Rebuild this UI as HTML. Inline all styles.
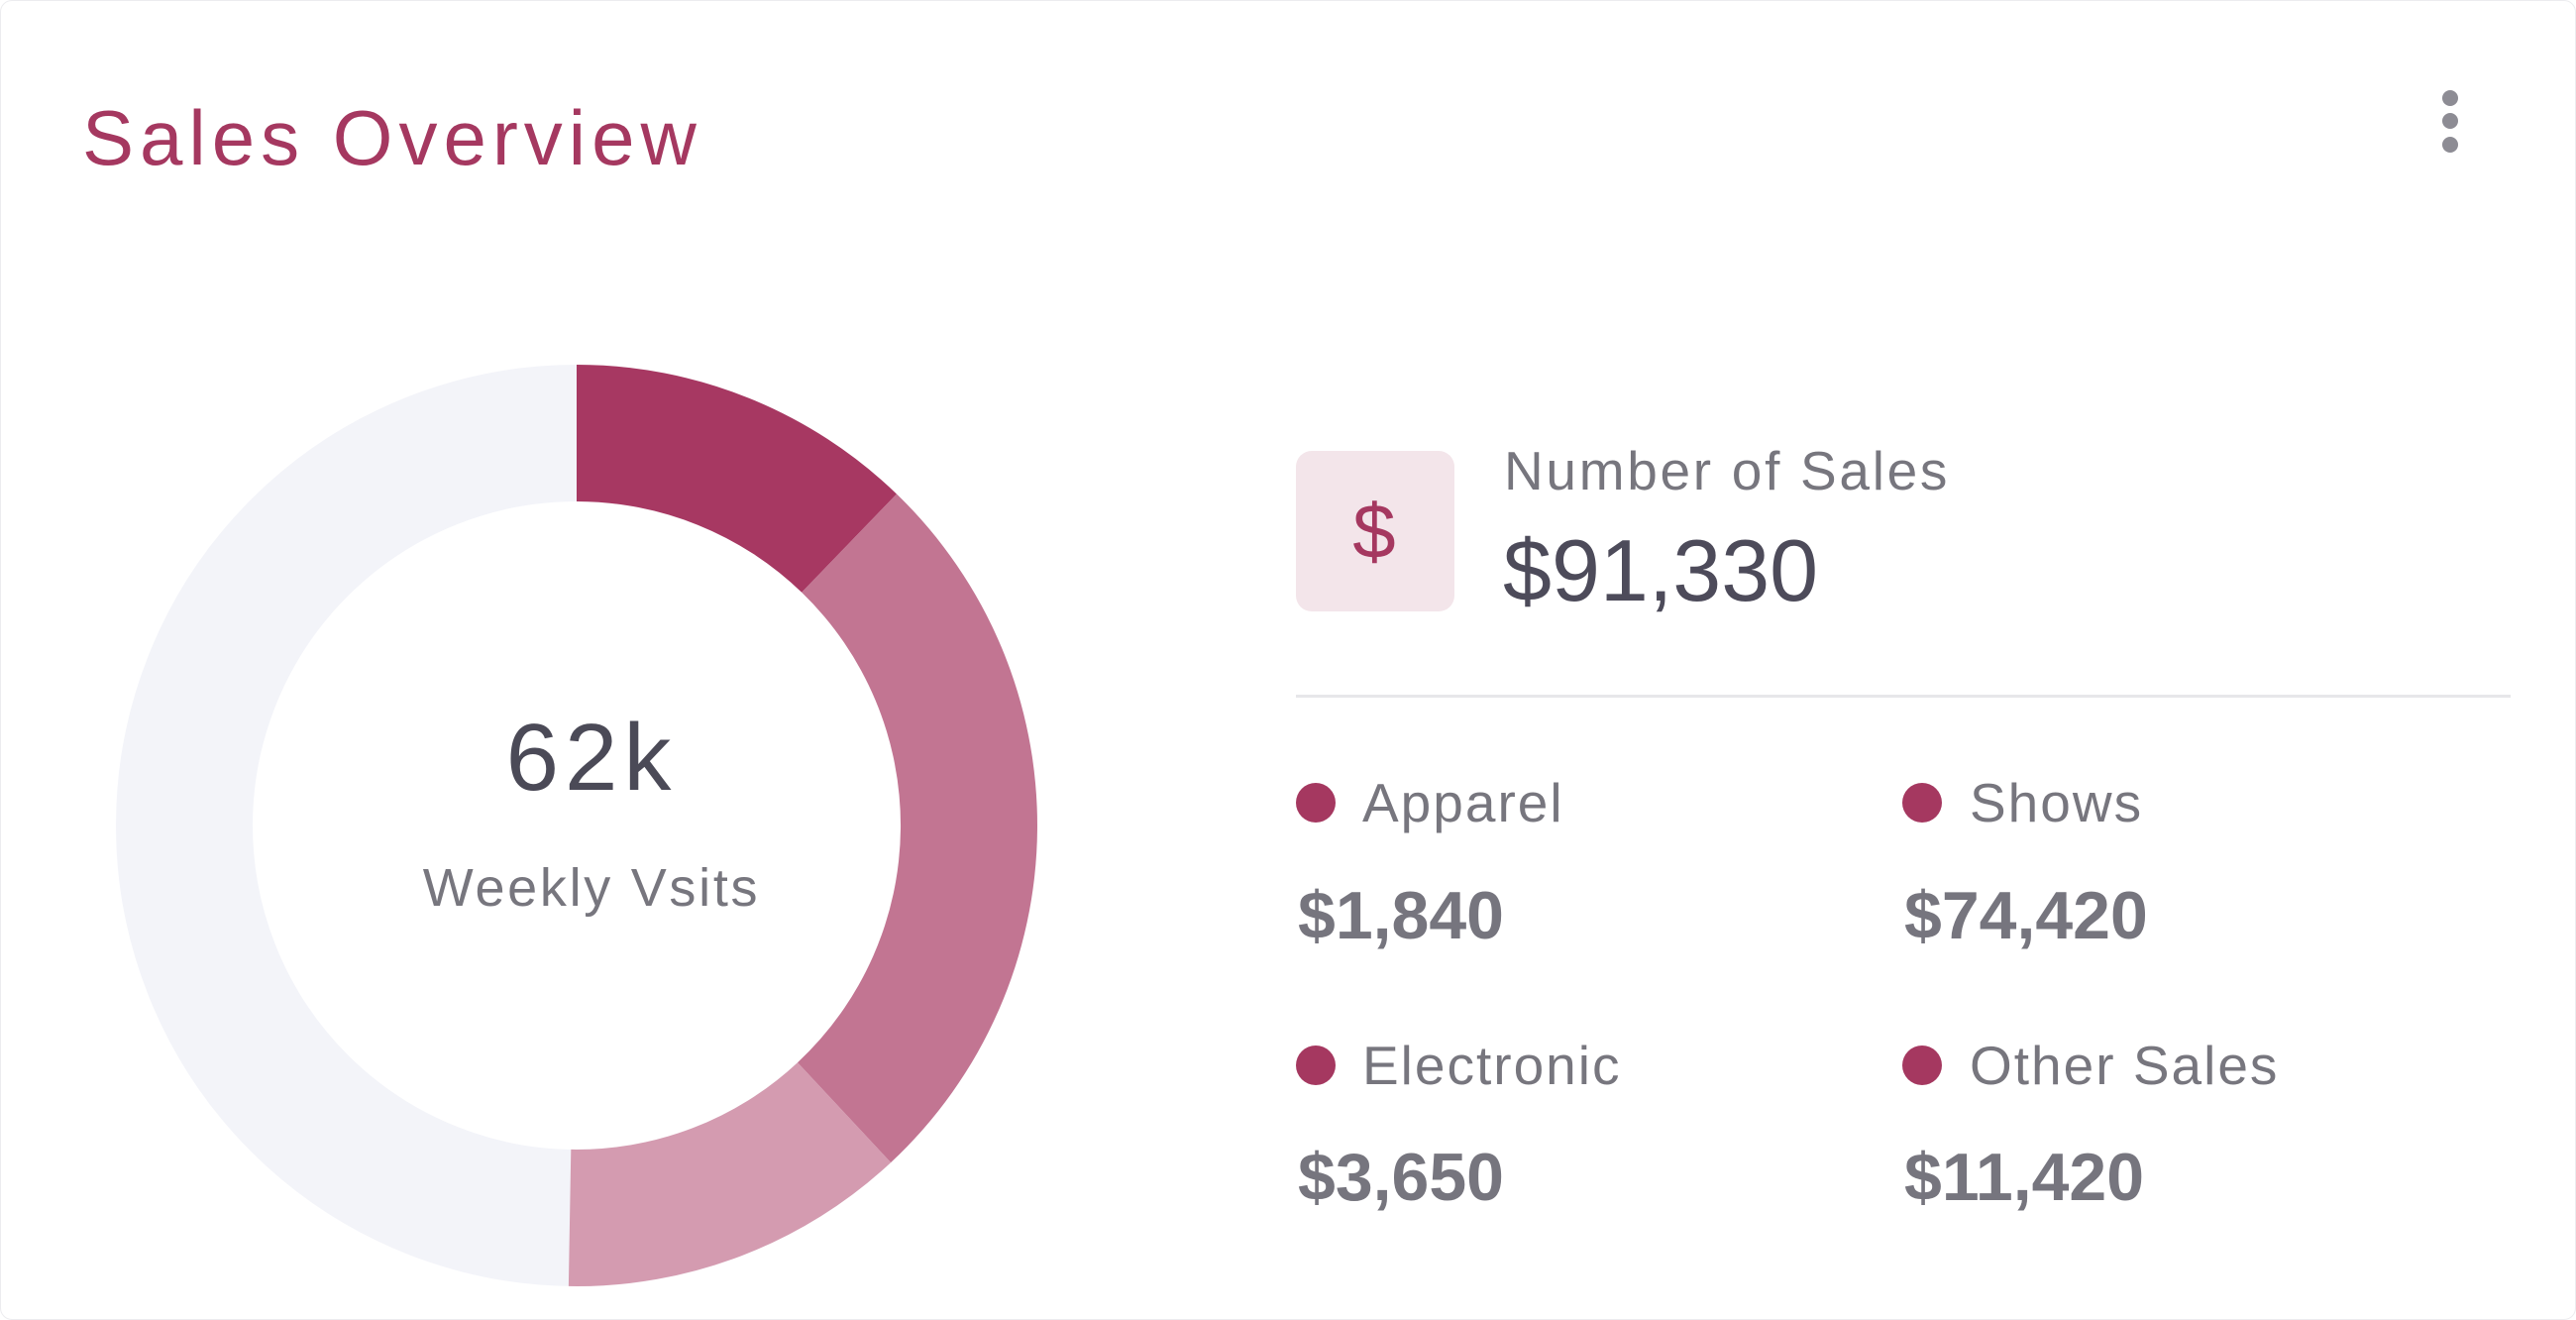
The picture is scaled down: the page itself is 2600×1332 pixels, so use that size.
<!DOCTYPE html>
<html><head><meta charset="utf-8"><style>
html,body{margin:0;padding:0;background:#fff;}
body{width:2600px;height:1318px;overflow:hidden;position:relative;font-family:"Liberation Sans",sans-serif;}
.card{position:absolute;left:0;top:0;width:2598px;height:1330px;border:1px solid #ececef;border-radius:12px;}
</style></head><body>
<div class="card"></div>
<svg width="2600" height="1318" style="position:absolute;left:0;top:0" font-family="Liberation Sans, sans-serif">
<text x="83" y="166" font-size="78" fill="#a53860" letter-spacing="6">Sales Overview</text>
<circle cx="2473" cy="99" r="8" fill="#8d8c94"/>
<circle cx="2473" cy="122" r="8" fill="#8d8c94"/>
<circle cx="2473" cy="146" r="8" fill="#8d8c94"/>
<circle cx="582" cy="833" r="396" fill="none" stroke="#f3f4f9" stroke-width="138"/>
<path d="M582,368 A465,465 0 0 1 905,498.5 L809.2,597.8 A327,327 0 0 0 582,506 Z" fill="#a73862"/>
<path d="M905,498.5 A465,465 0 0 1 899.1,1173.1 L805,1072.2 A327,327 0 0 0 809.2,597.8 Z" fill="#c27592"/>
<path d="M899.1,1173.1 A465,465 0 0 1 573.9,1297.9 L576.3,1159.9 A327,327 0 0 0 805,1072.2 Z" fill="#d49bb0"/>
<text x="597" y="797" font-size="96" fill="#4b4a57" text-anchor="middle" letter-spacing="6">62k</text>
<text x="597" y="914" font-size="54" fill="#77767e" text-anchor="middle" letter-spacing="2.7">Weekly Vsits</text>
<rect x="1308" y="455" width="160" height="162" rx="16" fill="#f3e5ea"/>
<text x="1387" y="563" font-size="78" fill="#a53860" text-anchor="middle">$</text>
<text x="1518" y="494" font-size="55" fill="#77767e" letter-spacing="2.7">Number of Sales</text>
<text x="1517" y="606" font-size="88" fill="#4d4b5a">$91,330</text>
<rect x="1308" y="701" width="1226" height="3" fill="#e7e7ea"/>
<g font-size="55" fill="#77767e" letter-spacing="2">
<circle cx="1328" cy="810" r="20" fill="#a53860"/>
<text x="1375" y="829">Apparel</text>
<circle cx="1940" cy="810" r="20" fill="#a53860"/>
<text x="1988" y="829">Shows</text>
<circle cx="1328" cy="1075" r="20" fill="#a53860"/>
<text x="1375" y="1094">Electronic</text>
<circle cx="1940" cy="1075" r="20" fill="#a53860"/>
<text x="1988" y="1094">Other Sales</text>
</g>
<g font-size="68" font-weight="bold" fill="#76757e">
<text x="1310" y="947">$1,840</text>
<text x="1922" y="947">$74,420</text>
<text x="1310" y="1211">$3,650</text>
<text x="1922" y="1211">$11,420</text>
</g>
</svg>
</body></html>
